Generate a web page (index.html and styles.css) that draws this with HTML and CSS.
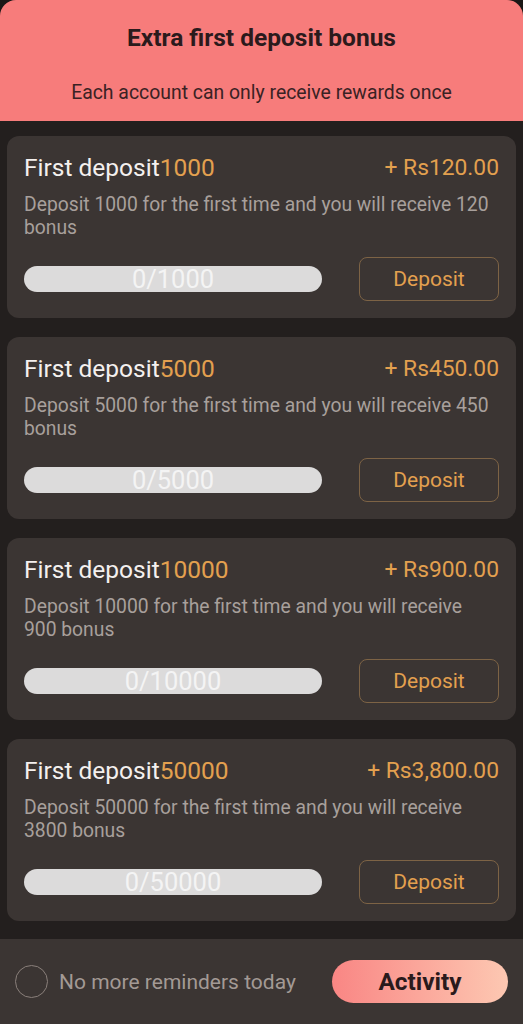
FILE: index.html
```html
<!DOCTYPE html>
<html>

<head>
    <meta charset="UTF-8">
    <title>Extra first deposit bonus</title>
    <link rel="stylesheet" href="styles.css">
</head>

<body>
    <div class="popup">
        <div class="header">
            <div class="header-title">Extra first deposit bonus</div>
            <div class="header-sub">Each account can only receive rewards once</div>
        </div>
        <div class="list">
            <div class="card">
                <div class="card-top">
                    <div class="card-title">First deposit<span class="hl">1000</span></div>
                    <div class="card-amount">+ Rs120.00</div>
                </div>
                <div class="card-desc">Deposit 1000 for the first time and you will receive 120 bonus</div>
                <div class="card-bottom">
                    <div class="progress">0/1000</div>
                    <button class="btn-deposit">Deposit</button>
                </div>
            </div>
            <div class="card">
                <div class="card-top">
                    <div class="card-title">First deposit<span class="hl">5000</span></div>
                    <div class="card-amount">+ Rs450.00</div>
                </div>
                <div class="card-desc">Deposit 5000 for the first time and you will receive 450 bonus</div>
                <div class="card-bottom">
                    <div class="progress">0/5000</div>
                    <button class="btn-deposit">Deposit</button>
                </div>
            </div>
            <div class="card">
                <div class="card-top">
                    <div class="card-title">First deposit<span class="hl">10000</span></div>
                    <div class="card-amount">+ Rs900.00</div>
                </div>
                <div class="card-desc">Deposit 10000 for the first time and you will receive 900 bonus</div>
                <div class="card-bottom">
                    <div class="progress">0/10000</div>
                    <button class="btn-deposit">Deposit</button>
                </div>
            </div>
            <div class="card">
                <div class="card-top">
                    <div class="card-title">First deposit<span class="hl">50000</span></div>
                    <div class="card-amount">+ Rs3,800.00</div>
                </div>
                <div class="card-desc">Deposit 50000 for the first time and you will receive 3800 bonus</div>
                <div class="card-bottom">
                    <div class="progress">0/50000</div>
                    <button class="btn-deposit">Deposit</button>
                </div>
            </div>
        </div>
        <div class="footer">
            <label class="remind">
                <span class="circle"></span>
                <span>No more reminders today</span>
            </label>
            <button class="btn-activity">Activity</button>
        </div>
    </div>
</body>

</html>
```

FILE: styles.css
```css
html,
body {
    margin: 0;
    padding: 0;
    background-color: #1a1716;
}

body {
    font-family: Roboto, "Noto Sans", sans-serif;
}

.popup {
    width: 523px;
    height: 1024px;
    display: flex;
    flex-direction: column;
    background-color: #231f1e;
    border-radius: 16px 16px 0 0;
    overflow: hidden;
}

.header {
    height: 121px;
    background-color: #f77c7b;
    display: flex;
    flex-direction: column;
    align-items: center;
    box-sizing: border-box;
    padding-top: 23px;
}

.header-title {
    font-size: 24.5px;
    font-weight: 700;
    color: #2b1a1c;
    line-height: 30px;
}

.header-sub {
    margin-top: 27px;
    font-size: 19.4px;
    color: #3a2224;
    line-height: 26px;
}

.list {
    display: flex;
    flex-direction: column;
    gap: 19px;
    padding: 15px 7px 18px;
}

.card {
    background-color: #3b3533;
    border-radius: 12px;
    padding: 17px 17px 17px 17px;
}

.card-top {
    display: flex;
    justify-content: space-between;
    align-items: center;
    height: 28px;
}

.card-title {
    font-size: 24.5px;
    color: #f4f0ee;
}

.hl {
    color: #e3a04f;
}

.card-amount {
    font-size: 22.8px;
    color: #e3a04f;
}

.card-desc {
    margin-top: 12px;
    font-size: 19.3px;
    line-height: 23px;
    color: #a8a09c;
    height: 46px;
}

.card-bottom {
    margin-top: 18px;
    display: flex;
    justify-content: space-between;
    align-items: center;
    height: 44px;
}

.progress {
    width: 298px;
    height: 26px;
    border-radius: 13px;
    background-color: #dcdbdb;
    color: #f4f4f4;
    font-size: 25.5px;
    line-height: 26px;
    text-align: center;
}

.btn-deposit {
    width: 140px;
    height: 44px;
    border: 1px solid #7d6345;
    border-radius: 8px;
    background: transparent;
    color: #e3a04f;
    font-family: Roboto, sans-serif;
    font-size: 21px;
    cursor: pointer;
}

.footer {
    flex: 1;
    background-color: #3b3533;
    display: flex;
    align-items: center;
    justify-content: space-between;
    padding: 0 15px 0 15px;
}

.remind {
    display: flex;
    align-items: center;
    gap: 11px;
    font-size: 21px;
    color: #a39a95;
}

.circle {
    width: 31px;
    height: 31px;
    border: 1px solid #8a807b;
    border-radius: 50%;
}

.btn-activity {
    width: 176px;
    height: 43px;
    border: none;
    border-radius: 22px;
    background: linear-gradient(90deg, #f98684, #fdc8b2);
    color: #2a1a1c;
    font-family: Roboto, sans-serif;
    font-size: 24.4px;
    font-weight: 700;
    cursor: pointer;
}
```
